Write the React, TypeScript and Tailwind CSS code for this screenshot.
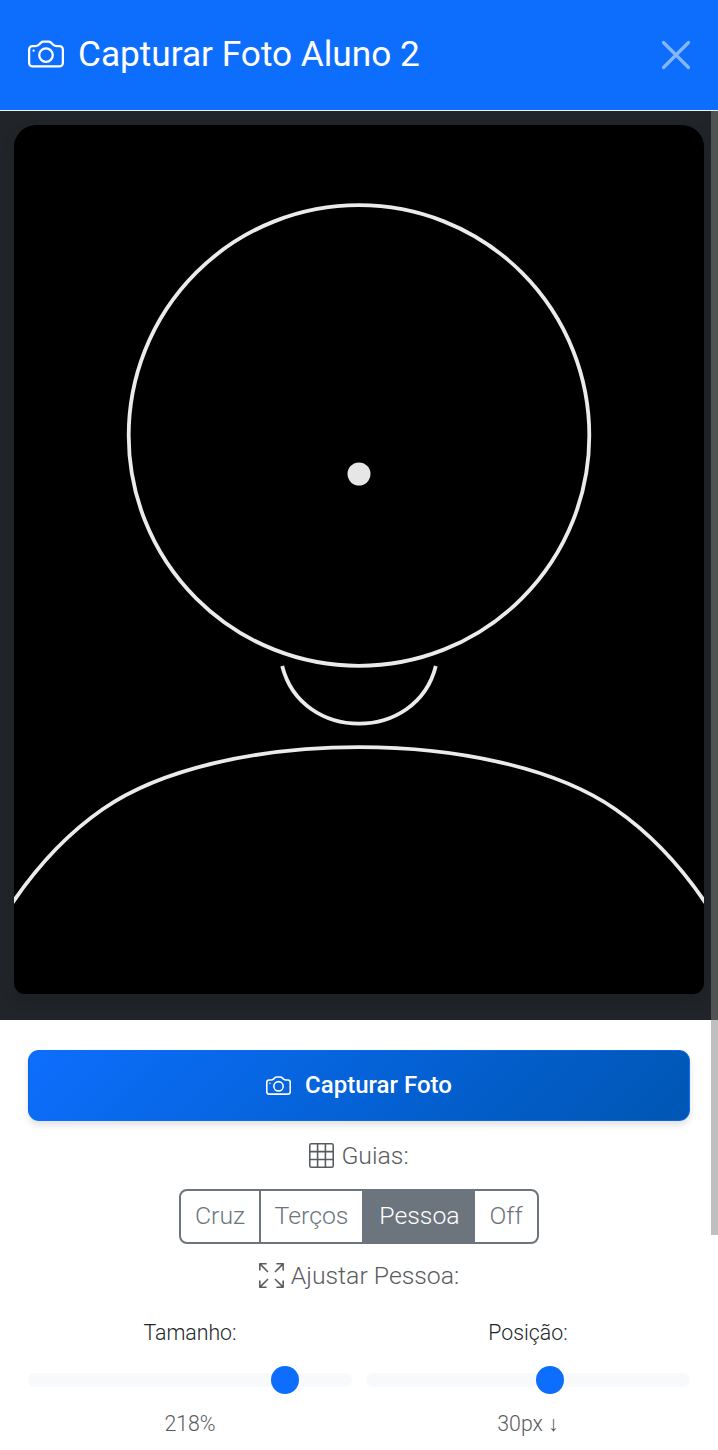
import { BsArrowsFullscreen, BsCamera, BsGrid3X3 } from "react-icons/bs";

const guides = [
  { label: "Cruz", width: "w-[80px]" },
  { label: "Terços", width: "w-[103px]" },
  { label: "Pessoa", width: "w-[111px]", active: true },
  { label: "Off", width: "flex-1" },
];

function PersonGuide() {
  return (
    <svg viewBox="0 0 690 869" className="block h-full w-full" fill="none" stroke="#ebebeb" strokeWidth="3.8">
      <circle cx="345" cy="310.5" r="230.3" />
      <circle cx="345" cy="349" r="11.5" fill="#e6e6e6" stroke="none" />
      <path d="M268.2 541C287.4 617.8 402.6 617.8 421.8 541" />
      <path d="M-14 797Q31 724 89 684C208 601.5 482 601.5 601 684Q659 724 704 797" />
    </svg>
  );
}

function Slider({ label, value, position }: { label: string; value: string; position: number }) {
  return (
    <div className="flex flex-1 flex-col items-center">
      <span className="h-8 text-[21.3px] leading-8 text-[#212529]">{label}</span>
      <div className="mt-[17px] flex h-[28px] w-full items-center rounded-full">
        <div className="flex h-[14px] w-full items-center rounded-full bg-[#f8f9fa]">
          <div className="h-[28px] w-[28px] rounded-full bg-[#0d6efd]" style={{ marginLeft: position }} />
        </div>
      </div>
      <span className="mt-[14px] h-8 text-[21.3px] leading-8 text-[#595c5f]">{value}</span>
    </div>
  );
}

export default function App() {
  return (
    <div className="flex h-[1450px] w-[718px] flex-col overflow-hidden bg-white font-['Roboto',sans-serif] font-light">
      <header className="flex h-[110px] shrink-0 items-center bg-[#0d6efd] pr-[27px] pl-[28px] text-white">
        <BsCamera className="mb-[2px] h-[36px] w-[36px]" />
        <h1 className="mb-px ml-[14px] text-[35.2px] leading-[53px] font-[380]">Capturar Foto Aluno 2</h1>
        <button className="ml-auto" aria-label="Fechar">
          <svg viewBox="0 0 30 30" className="block h-[30px] w-[30px]" stroke="#86b7fe" strokeWidth="3.2" strokeLinecap="round">
            <path d="M2.5 2.5L27.5 27.5M27.5 2.5L2.5 27.5" />
          </svg>
        </button>
      </header>
      <div className="relative flex min-h-0 flex-1 flex-col border-t border-[#f1f4f7]">
        <div className="h-[909px] shrink-0 bg-[#212529] px-[14px] pt-[14px]">
          <div className="h-[869px] overflow-hidden rounded-t-[22px] rounded-b-[11px] bg-black shadow-[0_7px_14px_rgba(0,0,0,0.15)]">
            <PersonGuide />
          </div>
        </div>
        <div className="flex flex-1 flex-col items-center px-[28px] pt-[30px]">
          <button className="flex h-[71px] w-full items-center justify-center rounded-[11px] border border-[#0d6efd]/60 bg-linear-135 from-[#0d6efd] to-[#0056b3] pb-px text-[24px] font-medium text-white shadow-[0_4px_7px_rgba(0,0,0,0.12)]">
            <BsCamera className="h-[25px] w-[25px]" />
            <span className="ml-[14px]">Capturar Foto</span>
          </button>
          <div className="mt-[17px] flex h-[36px] items-center text-[24.8px] text-[#595c5f]">
            <BsGrid3X3 className="mb-[2px] h-[25px] w-[25px]" />
            <span className="ml-[7px]">Guias:</span>
          </div>
          <div className="mt-[15px] flex h-[55px] w-[360px] overflow-hidden rounded-[8px] border-2 border-[#6c757d] text-[24.8px] text-[#6c757d]">
            {guides.map((g) => (
              <button
                key={g.label}
                className={`${g.width} flex items-center justify-center pb-[2px] ${g.active ? "bg-[#6c757d] text-white" : "border-r-2 border-[#6c757d] last:border-r-0"}`}
              >
                {g.label}
              </button>
            ))}
          </div>
          <div className="mt-[14px] flex h-[36px] items-center text-[24.8px] text-[#595c5f]">
            <BsArrowsFullscreen className="mb-[2px] h-[25px] w-[25px]" />
            <span className="ml-[7px]">Ajustar Pessoa:</span>
          </div>
          <div className="mt-[23px] flex w-full gap-[14px]">
            <Slider label="Tamanho:" value="218%" position={243} />
            <Slider label="Posição:" value="30px ↓" position={170} />
          </div>
        </div>
        <div className="absolute top-0 right-0 h-[1124px] w-[7px] bg-[#808080]/50" />
      </div>
    </div>
  );
}
